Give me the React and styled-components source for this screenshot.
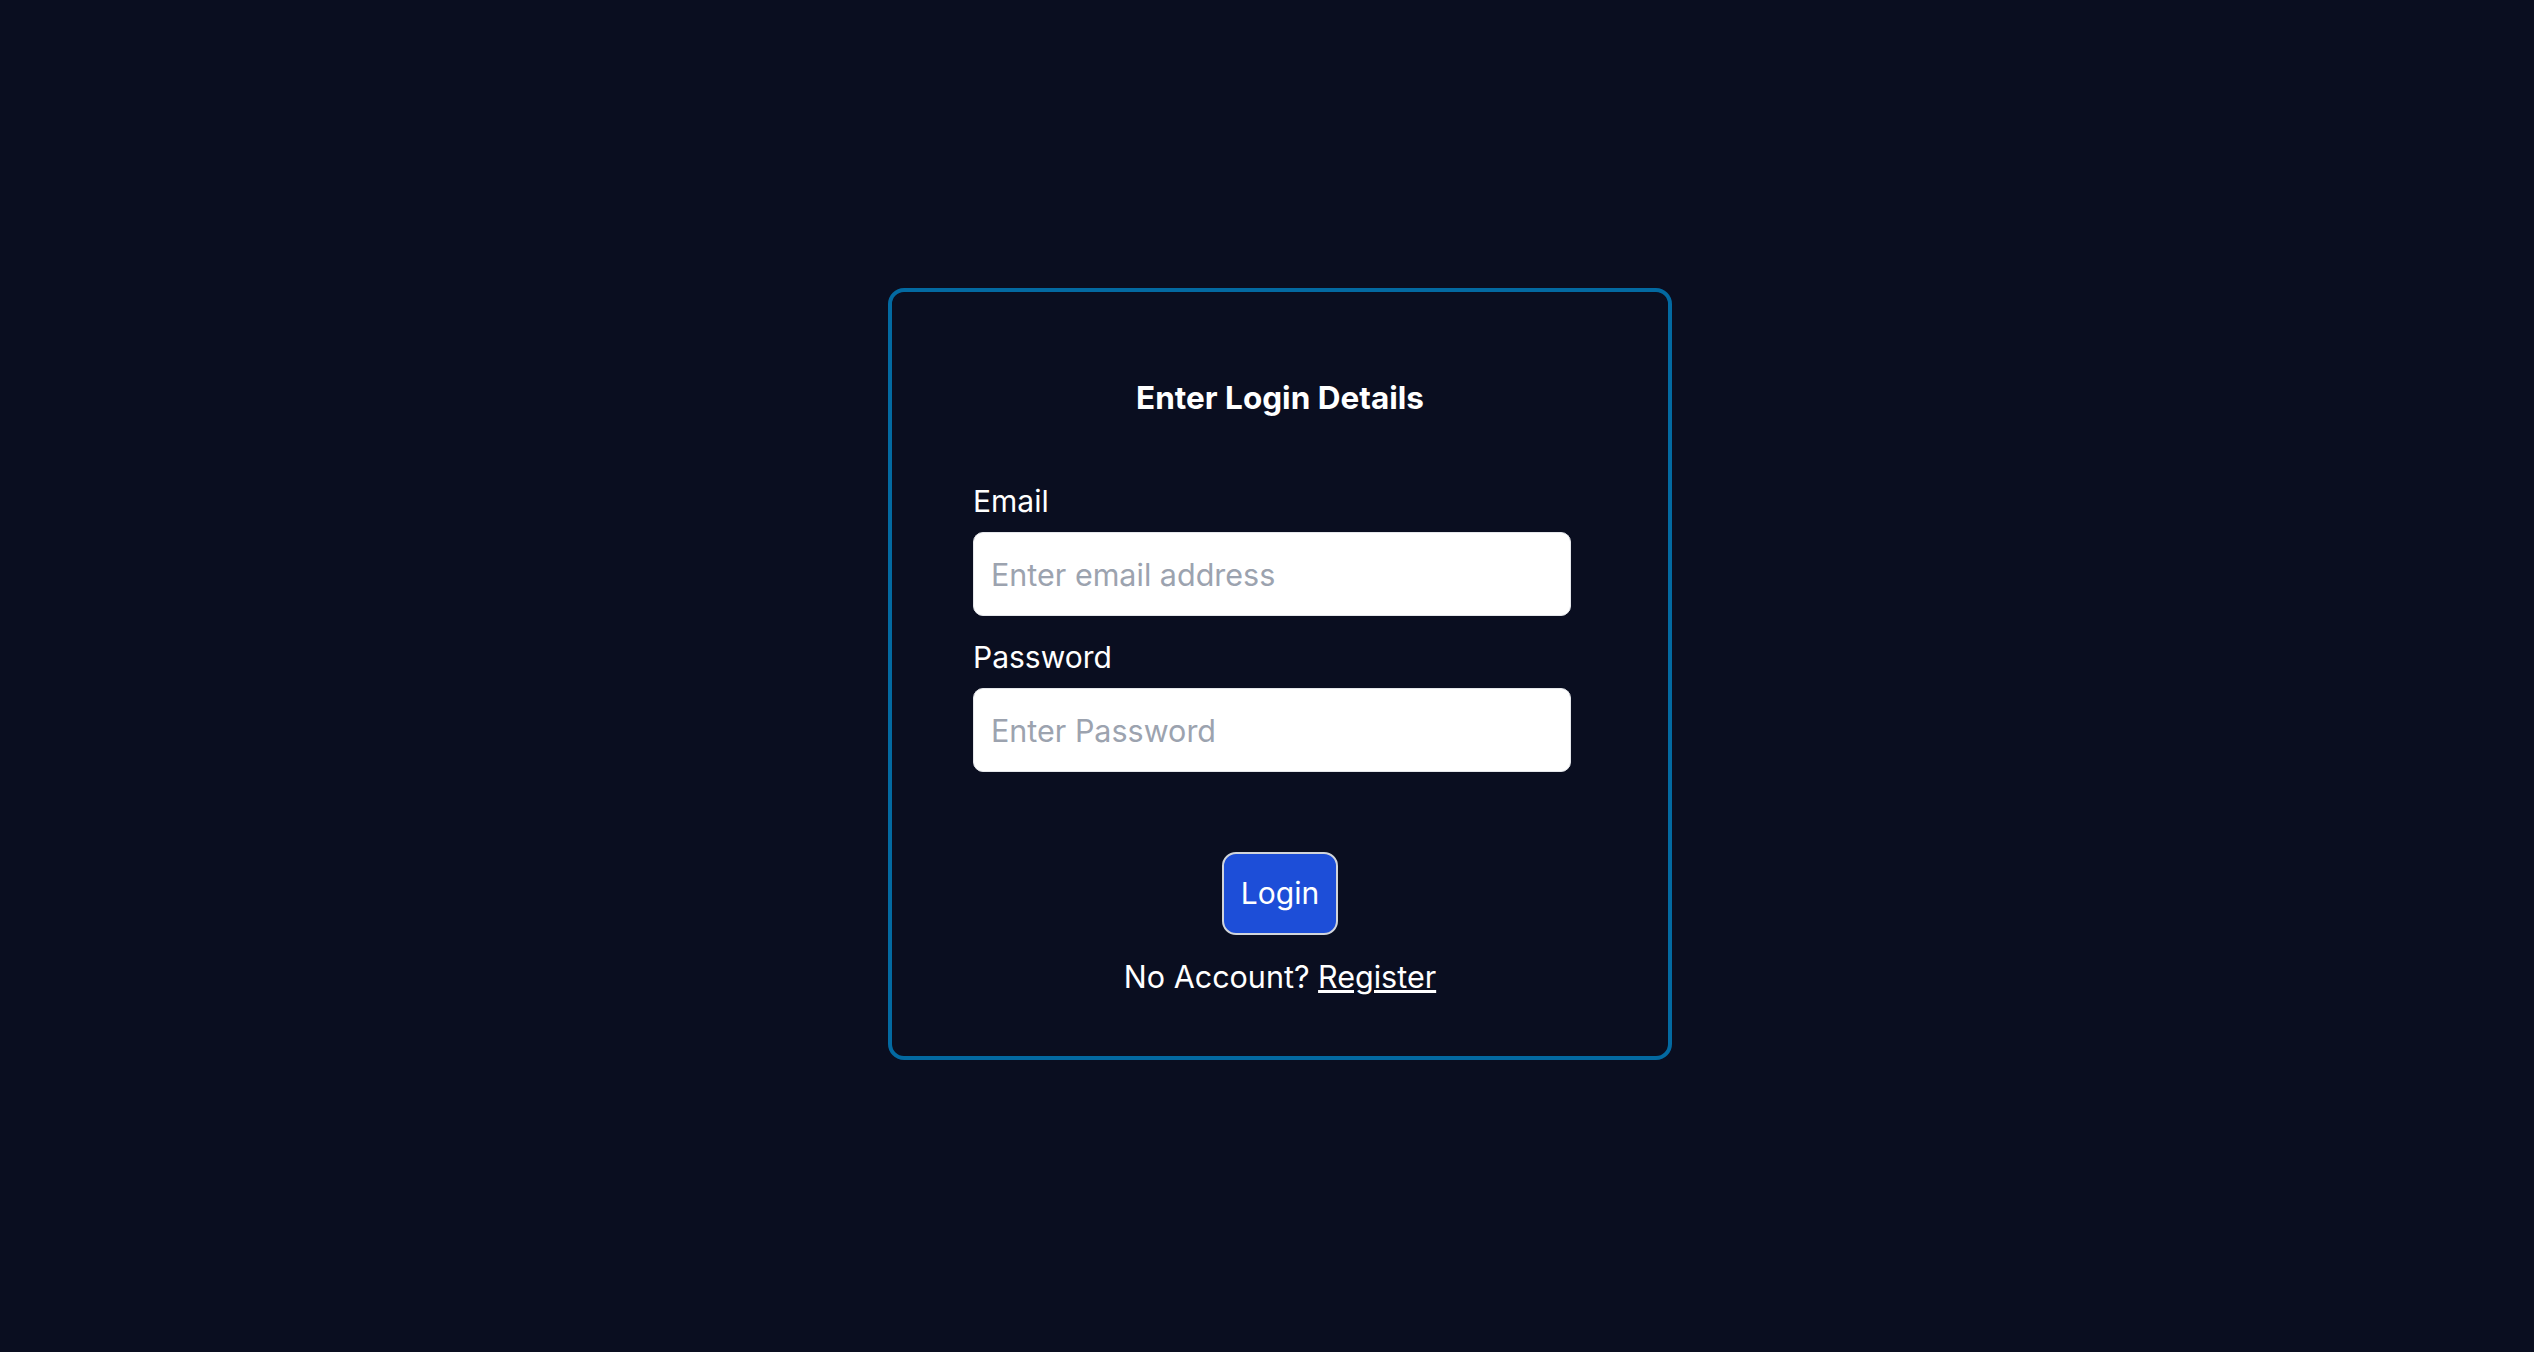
import styled, { createGlobalStyle } from "styled-components";

const GlobalStyle = createGlobalStyle`
  html, body {
    margin: 0;
    padding: 0;
    background: #0a0e20;
  }
  body {
    font-family: Inter, "Noto Sans", sans-serif;
    color: #fff;
  }
  * {
    box-sizing: border-box;
  }
`

const Page = styled.main`
  min-height: 100vh;
  display: flex;
  justify-content: center;
  align-items: center;
  padding: 0 0 4px 26px;
`

const Card = styled.section`
  width: 784px;
  height: 772px;
  border: 4px solid #0369a1;
  border-radius: 16px;
  padding: 83px 0 0 0;
  display: flex;
  flex-direction: column;
`

const Title = styled.h1`
  margin: 0;
  font-size: 31.5px;
  line-height: 45px;
  font-weight: 700;
  text-align: center;
`

const Form = styled.form`
  display: flex;
  flex-direction: column;
  margin-top: 59px;
`

const Fields = styled.div`
  display: flex;
  flex-direction: column;
  padding-left: 81px;
`

const Label = styled.label`
  font-size: 30px;
  line-height: 45px;
  margin-top: ${props => props.first ? '0' : '19px'};
  margin-bottom: 8px;
`

const Input = styled.input`
  width: 598px;
  height: 84px;
  border: 1px solid #e5e7eb;
  border-radius: 10px;
  background: #fff;
  padding: 0 17px;
  font-family: Inter, "Noto Sans", sans-serif;
  font-size: 30.5px;
  color: #111827;
  outline: none;

  &::placeholder {
    color: #9ca3af;
  }
`

const Actions = styled.div`
  display: flex;
  flex-direction: column;
  align-items: center;
  margin-top: 80px;
  gap: 19px;
`

const Button = styled.button`
  background: #1d4ed8;
  color: #fff;
  border: 2px solid #d1d5db;
  border-radius: 14px;
  padding: 17px 17px;
  font-family: Inter, "Noto Sans", sans-serif;
  font-size: 30px;
  line-height: 45px;
  cursor: pointer;
`

const Footer = styled.p`
  margin: 0;
  font-size: 30.5px;
  line-height: 45px;

  a {
    color: #fff;
    text-decoration: underline;
  }
`

export default function App() {
  return (
    <>
      <GlobalStyle />
      <Page>
        <Card>
          <Title>Enter Login Details</Title>
          <Form onSubmit={e => e.preventDefault()}>
            <Fields>
              <Label first htmlFor="email">Email</Label>
              <Input id="email" type="email" placeholder="Enter email address" />
              <Label htmlFor="password">Password</Label>
              <Input id="password" type="password" placeholder="Enter Password" />
            </Fields>
            <Actions>
              <Button type="submit">Login</Button>
              <Footer>No Account? <a href="#">Register</a></Footer>
            </Actions>
          </Form>
        </Card>
      </Page>
    </>
  )
}
